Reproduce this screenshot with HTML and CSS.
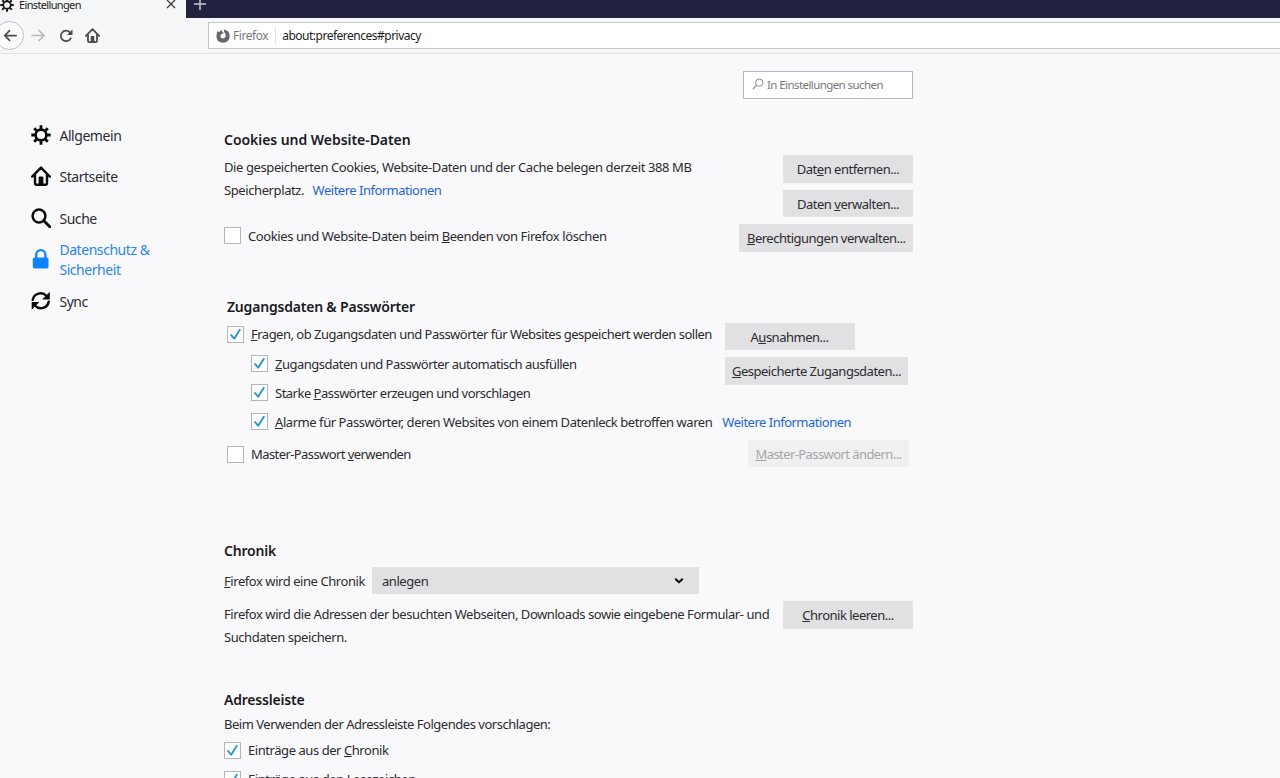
FILE: index.html
```html
<!DOCTYPE html>
<html lang="de">

<head>
  <meta charset="UTF-8">
  <meta name="viewport" content="width=device-width, initial-scale=1.0">
  <title>Einstellungen</title>
  <link rel="stylesheet" href="styles.css">
</head>

<body>
  <!-- shared shapes -->
  <svg class="defs" width="0" height="0">
    <symbol id="gear" viewBox="0 0 20 20">
      <circle cx="10" cy="10" r="5.400" fill="none" stroke="currentColor" stroke-width="2.600" />
      <path d="M10 4.500V.3M10 15.500v4.200M4.500 10H.3M15.500 10h4.200M6.200 6.200l-3-3M13.800 13.800l3 3M6.200 13.800l-3 3M13.800 6.200l3-3" stroke="currentColor" stroke-width="2.800" />
    </symbol>
    <symbol id="home" viewBox="0 0 20 20">
      <path d="M1.200 10.600L10 1.600l8.800 9M4 8.500V17q0 1.700 1.700 1.700h8.600Q16 18.700 16 17V8.500" fill="none" stroke="currentColor" stroke-width="2.400" stroke-linecap="round" stroke-linejoin="round" />
      <path d="M7.600 18.500v-7q0-1 1-1h2.800q1 0 1 1v7z" fill="currentColor" />
    </symbol>
    <symbol id="check" viewBox="0 0 16 16">
      <path d="M3.300 8.600l3.300 3.900L12.600 3" fill="none" stroke="#2a94cf" stroke-width="2" stroke-linecap="round" stroke-linejoin="round" />
    </symbol>
  </svg>

  <div class="tabstrip">
    <div class="tab">
      <svg class="tab-icon"><use href="#gear" /></svg>
      <span class="tab-title">Einstellungen</span>
      <svg class="tab-close" viewBox="0 0 10 10"><path d="M1 1l8 8M9 1l-8 8" stroke="#3a3a3e" stroke-width="1.300" /></svg>
    </div>
    <svg class="new-tab" viewBox="0 0 12 12"><path d="M6 0v12M0 6h12" stroke="#c9c9d6" stroke-width="1.500" /></svg>
  </div>

  <div class="toolbar">
    <div class="back">
      <svg width="14" height="13" viewBox="0 0 16 14"><path d="M15 7H2M7.500 1.500L2 7l5.500 5.500" fill="none" stroke="#4a4a4f" stroke-width="2" stroke-linecap="round" stroke-linejoin="round" /></svg>
    </div>
    <svg class="forward" viewBox="0 0 16 14"><path d="M1 7h13M8.500 1.500L14 7l-5.500 5.500" fill="none" stroke="#b9b9bc" stroke-width="1.800" stroke-linecap="round" stroke-linejoin="round" /></svg>
    <svg class="reload" viewBox="0 0 14 14"><path d="M11.700 9.300A5.200 5.200 0 1 1 10.900 3.400" fill="none" stroke="#4a4a4f" stroke-width="1.800" stroke-linecap="round" /><path d="M13.500.6v5.500H8z" fill="#4a4a4f" /></svg>
    <svg class="home-btn"><use href="#home" /></svg>
    <div class="urlbar">
      <svg class="fox" viewBox="0 0 14 14">
        <path d="M1.700 2l1.600 1.200Q4.300 1.700 5.300.8q.1 1.500 1.500 2.300L7.600 4 5.400 5.200q-1.300 1-.9 2.500.7 1.700 2.500 1.700 2.500-.2 2.700-2.700.1-2.200-1.500-3.700L7.700.5q5.900.8 6 6.500-.3 6.300-6.700 6.700Q.7 13.300.4 7.200.4 4 1.700 2z" fill="#66666b" />
      </svg>
      <span class="identity">Firefox</span>
      <span class="url">about:preferences#privacy</span>
    </div>
  </div>

  <div class="page">
    <div class="sidebar">
      <div class="category">
        <svg class="cat-icon"><use href="#gear" /></svg>
        <span>Allgemein</span>
      </div>
      <div class="category">
        <svg class="cat-icon"><use href="#home" /></svg>
        <span>Startseite</span>
      </div>
      <div class="category">
        <svg class="cat-icon" viewBox="0 0 20 20"><circle cx="8" cy="8" r="6.400" fill="none" stroke="currentColor" stroke-width="2.500" /><path d="M12.800 12.800l6 6" stroke="currentColor" stroke-width="2.900" stroke-linecap="round" /></svg>
        <span>Suche</span>
      </div>
      <div class="category selected">
        <svg class="cat-icon" viewBox="0 0 20 20"><path d="M5.200 9V5.800a4.600 4.600 0 0 1 9.200 0V9" fill="none" stroke="currentColor" stroke-width="2.300" /><rect x="1.800" y="8.500" width="15.700" height="11" rx="1.800" fill="currentColor" /></svg>
        <span>Datenschutz &amp;<br>Sicherheit</span>
      </div>
      <div class="category">
        <svg class="cat-icon" viewBox="0 0 20 20">
          <path d="M1.800 8.800A7.900 7.900 0 0 1 15.500 5M17.700 10.700A7.900 7.900 0 0 1 4 14.500" fill="none" stroke="currentColor" stroke-width="2.500" stroke-linecap="round" />
          <path d="M18.800.8v7.600h-7.600zM.7 18.700v-7.600h7.600z" fill="currentColor" />
        </svg>
        <span>Sync</span>
      </div>
    </div>

    <div class="main">
      <div class="search">
        <svg width="12" height="12" viewBox="0 0 12 12"><circle cx="7.200" cy="4.700" r="3.700" fill="none" stroke="#8a8a8e" /><path d="M4.500 7.400L1 11" stroke="#8a8a8e" stroke-width="1.200" /></svg>
        <span>In Einstellungen suchen</span>
      </div>

      <section class="cookies">
        <h2>Cookies und Website-Daten</h2>
        <div class="split">
          <div>
            <p>Die gespeicherten Cookies, Website-Daten und der Cache belegen derzeit 388 MB<br>Speicherplatz. <a class="link">Weitere Informationen</a></p>
            <div class="check-row">
              <span class="box"></span>
              <span>Cookies und Website-Daten beim <u>B</u>eenden von Firefox löschen</span>
            </div>
          </div>
          <div class="buttons">
            <div class="btn">Dat<u>e</u>n entfernen...</div>
            <div class="btn">Daten <u>v</u>erwalten...</div>
            <div class="btn"><u>B</u>erechtigungen verwalten...</div>
          </div>
        </div>
      </section>

      <section class="logins">
        <h2>Zugangsdaten &amp; Passwörter</h2>
        <div class="split">
          <div class="login-checks">
            <div class="check-row">
              <span class="box"><svg><use href="#check" /></svg></span>
              <span><u>F</u>ragen, ob Zugangsdaten und Passwörter für Websites gespeichert werden sollen</span>
            </div>
            <div class="check-row indent">
              <span class="box"><svg><use href="#check" /></svg></span>
              <span><u>Z</u>ugangsdaten und Passwörter automatisch ausfüllen</span>
            </div>
            <div class="check-row indent">
              <span class="box"><svg><use href="#check" /></svg></span>
              <span>Starke <u>P</u>asswörter erzeugen und vorschlagen</span>
            </div>
          </div>
          <div class="buttons">
            <div class="btn">A<u>u</u>snahmen...</div>
            <div class="btn"><u>G</u>espeicherte Zugangsdaten...</div>
          </div>
        </div>
        <div class="check-row indent">
          <span class="box"><svg><use href="#check" /></svg></span>
          <span><u>A</u>larme für Passwörter, deren Websites von einem Datenleck betroffen waren</span>
          <a class="link">Weitere Informationen</a>
        </div>
        <div class="split master">
          <div class="check-row">
            <span class="box"></span>
            <span>Master-Passwort <u>v</u>erwenden</span>
          </div>
          <div class="btn disabled"><u>M</u>aster-Passwort ändern...</div>
        </div>
      </section>

      <section class="history">
        <h2>Chronik</h2>
        <div class="history-mode">
          <span><u>F</u>irefox wird eine Chronik</span>
          <div class="select">
            <span>anlegen</span>
            <svg width="10" height="8" viewBox="0 0 10 8"><path d="M1.800 2.200L5 5.200l3.200-3" fill="none" stroke="#0c0c0d" stroke-width="2" stroke-linecap="round" stroke-linejoin="round" /></svg>
          </div>
        </div>
        <div class="split">
          <p>Firefox wird die Adressen der besuchten Webseiten, Downloads sowie eingebene Formular- und<br>Suchdaten speichern.</p>
          <div class="btn"><u>C</u>hronik leeren...</div>
        </div>
      </section>

      <section class="addressbar">
        <h2>Adressleiste</h2>
        <p>Beim Verwenden der Adressleiste Folgendes vorschlagen:</p>
        <div class="check-row">
          <span class="box"><svg><use href="#check" /></svg></span>
          <span>Einträge aus der <u>C</u>hronik</span>
        </div>
        <div class="check-row">
          <span class="box"><svg><use href="#check" /></svg></span>
          <span>Einträge aus den <u>L</u>esezeichen</span>
        </div>
      </section>
    </div>
  </div>
</body>

</html>
```

FILE: styles.css
```css
* {
  box-sizing: border-box;
}

body {
  margin: 0;
  height: 778px;
  overflow: hidden;
  background-color: #f9f9fb;
  color: #2b2b30;
  font-family: "Noto Sans", "Open Sans", sans-serif;
  font-size: 13px;
  letter-spacing: -0.44px;
  white-space: nowrap;
}

svg {
  display: block;
  flex: none;
}

.defs {
  position: absolute;
}

u {
  text-decoration-thickness: 1px;
  text-underline-offset: 1px;
}

/* window chrome */
.tabstrip {
  display: flex;
  height: 18px;
  background-color: #20223f;
}

.tab {
  display: flex;
  width: 186px;
  height: 18px;
  background-color: #f5f6f7;
  font-size: 11px;
  line-height: 10px;
  color: #1c1c20;
}

.tab-icon {
  width: 14px;
  height: 14px;
  margin-top: -2px;
}

.tab-title {
  flex: 1;
  margin-left: 5px;
  letter-spacing: -0.65px;
}

.tab-close {
  width: 10px;
  height: 10px;
  margin: -1px 10px 0 0;
}

.new-tab {
  width: 12px;
  height: 12px;
  margin: -2px 0 0 8px;
}

.toolbar {
  display: flex;
  align-items: center;
  height: 36px;
  background-color: #f7f7f9;
  border-bottom: 1px solid #e2e2e4;
}

.back {
  display: flex;
  align-items: center;
  justify-content: flex-end;
  width: 29px;
  height: 29px;
  margin-left: -5px;
  padding-right: 6px;
  border: 1px solid #bfbfc3;
  border-radius: 50%;
  background-color: #fcfcfd;
}

.forward {
  width: 15px;
  height: 13px;
  margin-left: 7px;
}

.reload {
  width: 14px;
  height: 14px;
  margin-left: 13px;
}

.home-btn {
  width: 15px;
  height: 15px;
  margin-left: 12px;
  color: #4a4a4f;
}

.urlbar {
  display: flex;
  align-items: center;
  flex: 1;
  height: 27px;
  margin-left: 108px;
  padding-left: 7px;
  border: 1px solid #c6c6c8;
  border-right: 0;
  background-color: #fff;
  font-size: 12px;
}

.fox {
  width: 14px;
  height: 14px;
}

.identity {
  margin-left: 3px;
  padding-right: 7px;
  border-right: 1px solid #e3e3e5;
  color: #77777b;
}

.url {
  margin-left: 6px;
  color: #1c1c20;
  letter-spacing: -0.5px;
}

/* preferences */
.page {
  display: flex;
}

.sidebar {
  width: 224px;
  padding: 61px 0 0 31px;
  font-size: 14px;
  line-height: 20px;
}

.category {
  display: flex;
  align-items: center;
  height: 41.5px;
}

.cat-icon {
  width: 20px;
  height: 20px;
  margin: -2px 8.4px 0 0;
  color: #0c0c0d;
}

.selected,
.selected .cat-icon {
  color: #0a84ff;
}

.selected {
  color: #2a86e8;
}

.main {
  width: 689px;
  padding-top: 17px;
}

.search {
  display: flex;
  align-items: center;
  width: 170px;
  height: 28px;
  margin-left: auto;
  padding: 0 0 2px 8px;
  border: 1px solid #b8b8bb;
  background-color: #fff;
  color: #77777b;
  font-size: 11.5px;
  letter-spacing: -0.58px;
}

.search span {
  margin-left: 3px;
}

h2 {
  margin: 0;
  font-size: 14px;
  font-weight: 600;
  line-height: 24px;
  letter-spacing: -0.2px;
  color: #1a1a1e;
}

p {
  margin: 0;
  line-height: 23px;
}

.link {
  color: #1c66cf;
  margin-left: 5.5px;
  letter-spacing: -0.5px;
}

.split {
  display: flex;
  justify-content: space-between;
  align-items: flex-start;
}

.buttons {
  display: flex;
  flex-direction: column;
  align-items: flex-end;
  gap: 7px;
}

.btn {
  min-width: 130px;
  height: 27.5px;
  padding: 0 7.5px;
  background-color: #e1e1e3;
  line-height: 29px;
  letter-spacing: -0.5px;
  text-align: center;
}

.disabled {
  background-color: #f0f0f2;
  color: #a5a5a9;
  letter-spacing: -0.58px;
}

.check-row {
  display: flex;
  align-items: center;
  height: 29.2px;
}

.box {
  flex: none;
  width: 17px;
  height: 17px;
  margin-right: 7px;
  border: 1px solid #b5b5b8;
  background-color: #fff;
}

.box svg {
  width: 15px;
  height: 15px;
}

.indent {
  padding-left: 24px;
}

.cookies {
  margin-top: 29px;
}

.cookies h2 {
  letter-spacing: -0.05px;
}

.cookies .split {
  margin-top: 4px;
}

.cookies p,
.cookies .check-row {
  letter-spacing: -0.4px;
}

.cookies .check-row {
  margin-top: 19px;
}

.cookies .buttons {
  margin-top: -0.7px;
}

.logins {
  margin: 43px 4px 0 3px;
}

.login-checks {
  width: 497.5px;
  letter-spacing: -0.51px;
}

.logins .buttons {
  flex: 1;
  align-items: flex-start;
  margin-top: 3px;
}

.logins .split {
  margin-top: 1px;
}

.logins .link {
  margin-left: 10px;
}

.logins .master {
  margin-top: 3px;
  letter-spacing: -0.58px;
}

.history {
  margin-top: 70px;
}

.history-mode {
  display: flex;
  align-items: center;
  margin-top: 4px;
}

.select {
  display: flex;
  align-items: center;
  justify-content: space-between;
  width: 327px;
  height: 27.5px;
  margin-left: 7px;
  padding: 0 15px 0 10px;
  background-color: #e1e1e3;
}

.history .split {
  margin-top: 7px;
}

.history p {
  padding-top: 1.3px;
}

.addressbar {
  margin-top: 39px;
}

.addressbar p {
  padding-top: 1px;
  letter-spacing: -0.48px;
}
```
